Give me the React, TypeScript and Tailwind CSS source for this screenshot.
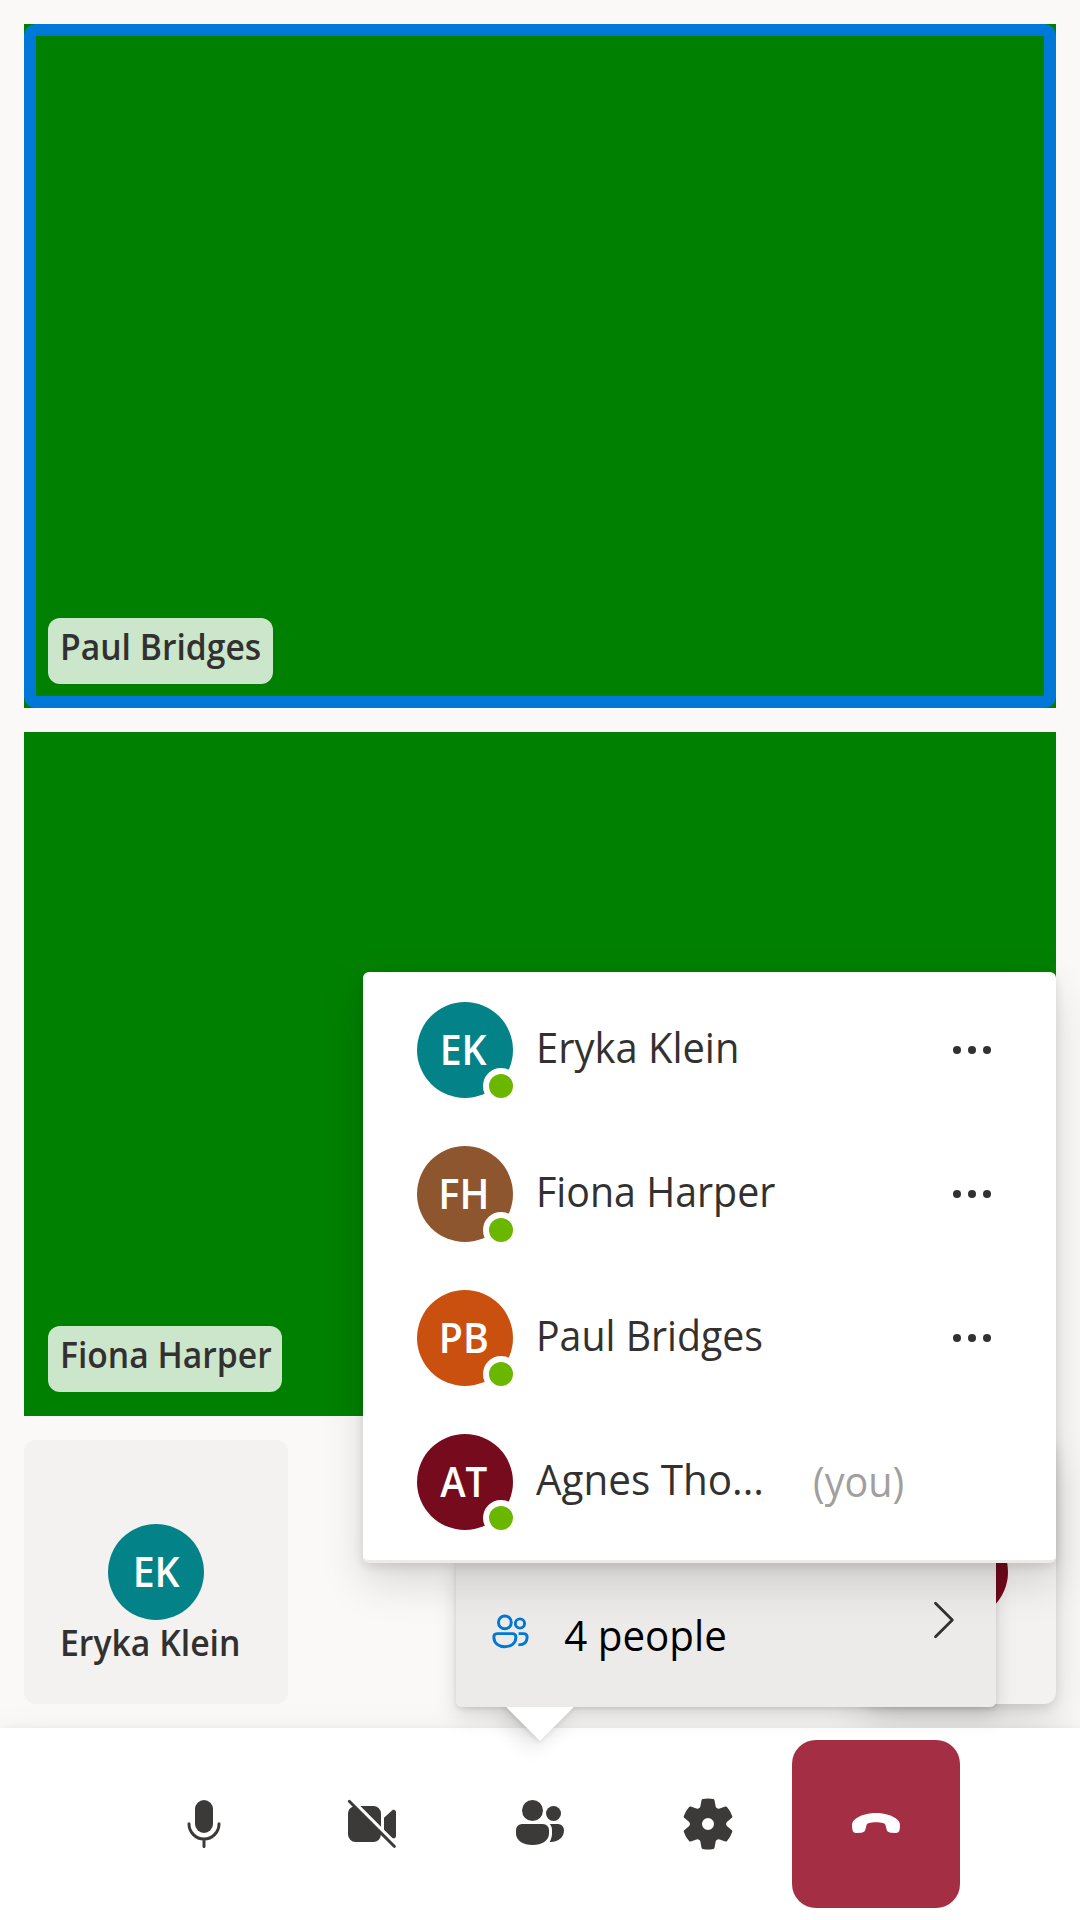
import React from 'react';

type Person = { name: string; initials: string; color: string; nameScale: string; initialsScale: string; you?: boolean };

const people: Person[] = [
  { name: 'Eryka Klein', initials: 'EK', color: 'bg-[#038387]', nameScale: 'scale-x-[0.95]', initialsScale: 'scale-x-[0.935]' },
  { name: 'Fiona Harper', initials: 'FH', color: 'bg-[#8e562e]', nameScale: 'scale-x-[0.937]', initialsScale: 'scale-x-[0.95]' },
  { name: 'Paul Bridges', initials: 'PB', color: 'bg-[#ca5010]', nameScale: 'scale-x-[0.935]', initialsScale: 'scale-x-[0.935]' },
  { name: 'Agnes Tho...', initials: 'AT', color: 'bg-[#750b1c]', nameScale: 'scale-x-[0.962]', initialsScale: 'scale-x-[0.915]', you: true },
];

function Avatar({ initials, color, scale, presence }: { initials: string; color: string; scale: string; presence?: boolean }) {
  return (
    <div className={`relative flex size-24 shrink-0 items-center justify-center rounded-full ${color} ${presence ? 'pr-[3px]' : ''}`}>
      <span className={`-mt-[3px] block text-[42px] leading-[56px] font-semibold text-white ${scale}`}>{initials}</span>
      {presence && <span className="absolute -right-[6px] -bottom-[6px] size-9 rounded-full border-[6px] border-white bg-[#6bb700]" />}
    </div>
  );
}

function VideoTile({ name, width, speaking }: { name: string; width: string; speaking?: boolean }) {
  return (
    <div className="relative h-[684px] w-full bg-[#008000]">
      {speaking && <div className="absolute inset-0 rounded-[12px] border-[12px] border-[#0078d7]" />}
      <div className={`absolute bottom-6 left-6 h-[66px] overflow-hidden rounded-[12px] bg-white/80 pt-px pl-[11.5px] ${width}`}>
        <span className="block origin-left scale-x-[0.935] text-[36px] leading-[55px] font-semibold whitespace-nowrap text-[#323130]">{name}</span>
      </div>
    </div>
  );
}

const elevated = 'shadow-[0_19.2px_43.2px_rgba(0,0,0,0.132),0_3.6px_10.8px_rgba(0,0,0,0.108)]';
const raised = 'shadow-[0_9.6px_21.6px_rgba(0,0,0,0.132),0_1.8px_5.4px_rgba(0,0,0,0.108)]';

function ControlButton({ children, className = '' }: { children: React.ReactNode; className?: string }) {
  return (
    <button className={`flex size-[168px] items-center justify-center rounded-[24px] ${className}`}>
      <svg viewBox="0 0 20 20" className="size-[60px]" fill="currentColor">{children}</svg>
    </button>
  );
}

export default function App() {
  return (
    <div className="relative flex h-[1920px] w-[1080px] flex-col overflow-hidden bg-[#faf9f8] font-['Open_Sans',sans-serif] text-[#323130]">
      <main className="flex flex-1 flex-col gap-6 p-6">
        <VideoTile name="Paul Bridges" width="w-[225px]" speaking />
        <VideoTile name="Fiona Harper" width="w-[234px]" />
        <div className="flex justify-between">
          <div className="flex size-[264px] flex-col items-center rounded-[12px] bg-[#f3f2f1] pt-[84px]">
            <Avatar initials="EK" color="bg-[#038387]" scale="scale-x-[0.935]" />
            <span className="-mt-[4px] ml-[36px] block origin-left scale-x-[0.938] self-start text-[36px] leading-[54px] font-semibold whitespace-nowrap">Eryka Klein</span>
          </div>
          <div className={`flex h-[264px] w-[192px] items-center justify-center rounded-[12px] bg-[#f3f2f1] ${elevated}`}>
            <Avatar initials="AT" color="bg-[#750b1c]" scale="scale-x-[0.915]" />
          </div>
        </div>
      </main>

      <footer className={`relative flex h-48 items-start justify-center bg-white pt-3 text-[#3b3a39] ${elevated}`}>
        <ControlButton>
          <rect x="7" y="2" width="6" height="11" rx="3" />
          <path d="M5 9.9v.1a5 5 0 0 0 10 0v-.1M10 15v2.5" fill="none" stroke="currentColor" strokeLinecap="round" />
        </ControlButton>
        <ControlButton>
          <path d="M2.85 2.15a.5.5 0 1 0-.7.7l1.44 1.44A2.5 2.5 0 0 0 2 6.5v7A2.5 2.5 0 0 0 4.5 16h6a2.5 2.5 0 0 0 2.45-2.35l4.2 4.2a.5.5 0 0 0 .7-.7l-15-15ZM13 10.88 6.12 4h4.38A2.5 2.5 0 0 1 13 6.5v4.38Zm1-2.95v3.95l2.7 2.7c.5.4 1.3.1 1.3-.6V6.02c0-.65-.74-1-1.24-.6L14 7.93Z" />
        </ControlButton>
        <ControlButton>
          <circle cx="7.5" cy="5.5" r="3.5" />
          <circle cx="14.5" cy="6.5" r="2.5" />
          <path d="M4 10a2 2 0 0 0-2 2v1.1C2 15.6 4.4 17 7.5 17S13 15.6 13 13.1V12a2 2 0 0 0-2-2H4Z" />
          <path d="M13.23 10c.48.53.77 1.23.77 2v1.1c0 1.1-.27 2.05-.8 2.86.1.03.2.04.3.04 2.8 0 4.5-1.7 4.5-3.8V12a2 2 0 0 0-2-2h-2.77Z" />
        </ControlButton>
        <ControlButton>
          <path d="M1.91 7.38A8.5 8.5 0 0 1 3.7 4.3a.5.5 0 0 1 .54-.13l1.92.68a1 1 0 0 0 1.32-.76l.36-2a.5.5 0 0 1 .4-.4 8.53 8.53 0 0 1 3.55 0c.2.04.35.2.38.4l.37 2a1 1 0 0 0 1.32.76l1.92-.68a.5.5 0 0 1 .54.13 8.5 8.5 0 0 1 1.78 3.08.5.5 0 0 1-.15.54l-1.56 1.32a1 1 0 0 0 0 1.52l1.56 1.32a.5.5 0 0 1 .15.54 8.5 8.5 0 0 1-1.78 3.08.5.5 0 0 1-.54.13l-1.92-.68a1 1 0 0 0-1.32.76l-.37 2a.5.5 0 0 1-.38.4 8.53 8.53 0 0 1-3.56 0 .5.5 0 0 1-.39-.4l-.36-2a1 1 0 0 0-1.32-.76l-1.92.68a.5.5 0 0 1-.54-.13 8.5 8.5 0 0 1-1.78-3.08.5.5 0 0 1 .15-.54l1.56-1.32a1 1 0 0 0 0-1.52L2.06 7.92a.5.5 0 0 1-.15-.54ZM8 10a2 2 0 1 0 4 0 2 2 0 0 0-4 0Z" />
        </ControlButton>
        <ControlButton className="bg-[#a42e43] text-white">
          <path d="M17.98 10.9l-.1.95c-.1.75-.55 1.15-1.3 1.13l-1.7-.1c-.75-.05-1.2-.4-1.37-1.1l-.32-1.3c-.1-.4-.3-.58-.7-.7C11.7 9.5 10.9 9.42 10 9.42s-1.7.08-2.49.36c-.4.12-.6.3-.7.7l-.32 1.3c-.17.7-.62 1.05-1.37 1.1l-1.7.1c-.75.02-1.2-.38-1.3-1.13l-.1-.95c-.1-1 .15-1.75.9-2.4C4.6 7.05 7.15 6.3 10 6.3s5.4.75 7.08 2.2c.75.65 1 1.4.9 2.4Z" />
        </ControlButton>
      </footer>

      <div className={`absolute top-[1554px] left-[456px] h-[153px] w-[540px] rounded-[6px] ${raised}`}>
        <div className={`absolute -bottom-6 left-[60px] size-12 rotate-45 bg-white ${raised}`} />
        <div className="relative flex h-full w-full items-start rounded-[6px] bg-[#edebe9] pt-[54px] pl-[31.500px]">
          <svg viewBox="0 0 20 20" className="mt-[1.500px] size-[45px] shrink-0" fill="none" stroke="#0078d4" strokeWidth="1.300">
            <circle cx="7.5" cy="5.5" r="2.850" />
            <circle cx="14.200" cy="6" r="2.050" />
            <path d="M4 10.500h6.900a1.500 1.500 0 0 1 1.500 1.500c0 2.900-2.300 4.300-4.900 4.300s-4.900-1.400-4.900-4.300a1.500 1.500 0 0 1 1.400-1.500Z" />
            <path d="M13.600 10.500h2.300a1.500 1.500 0 0 1 1.500 1.500c0 2.400-1.500 3.500-3.900 3.500" />
          </svg>
          <span className="block w-[346px] shrink-0 origin-left scale-x-[0.96] pl-[32.500px] text-[42px] leading-[53px] whitespace-nowrap text-black">4 people</span>
          <svg viewBox="0 0 30 60" className="-mt-[18px] ml-[51px] h-[60px] w-[30px] shrink-0" fill="none" stroke="#323130" strokeWidth="2.800" strokeLinecap="round" strokeLinejoin="round">
            <path d="M5.500 13.200 22.300 30 5.500 46.800" />
          </svg>
        </div>
      </div>

      <div className={`absolute top-[972px] right-6 flex h-[591px] w-[693px] flex-col rounded-[6px] border-b-[3px] border-[#edebe9] bg-white pt-[6px] ${elevated}`}>
        {people.map((p) => (
          <div key={p.initials} className="flex h-36 items-center pl-[54px]">
            <Avatar initials={p.initials} color={p.color} scale={p.initialsScale} presence />
            <span className={`-mt-[7px] ml-[23px] block w-[277px] shrink-0 origin-left text-[42px] leading-[56px] whitespace-nowrap ${p.nameScale}`}>{p.name}</span>
            {p.you ? (
              <span className="-mt-[2px] block origin-left scale-x-[0.94] text-[42px] leading-[56px] text-[#a19f9d]">(you)</span>
            ) : (
              <svg viewBox="0 0 60 60" className="ml-[129px] size-[60px]" fill="#323130">
                <circle cx="15" cy="30" r="4" />
                <circle cx="30" cy="30" r="4" />
                <circle cx="45" cy="30" r="4" />
              </svg>
            )}
          </div>
        ))}
      </div>
    </div>
  );
}
